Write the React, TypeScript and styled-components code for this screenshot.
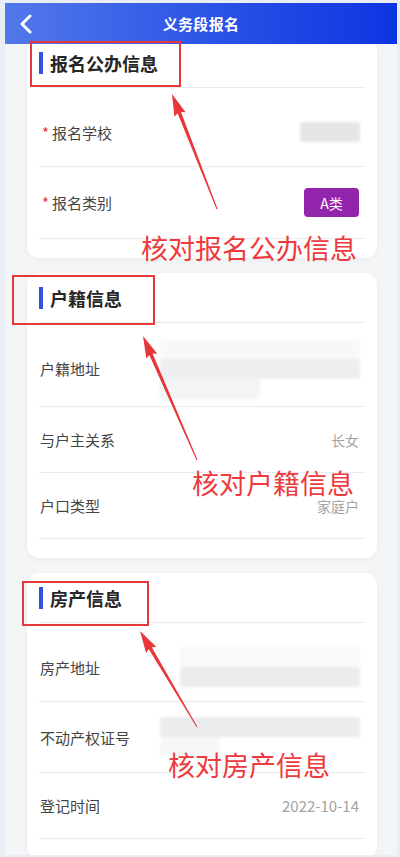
import React from "react";
import styled, { createGlobalStyle } from "styled-components";

const GlobalStyle = createGlobalStyle`
	html, body {
		margin: 0;
		padding: 0;
		background: #e9edf4;
		font-family: "Noto Sans CJK SC", "Noto Sans", sans-serif;
	}
	* {
		box-sizing: border-box;
	}
`;

const Root = styled.div`
	position: relative;
	width: 400px;
	height: 857px;
	padding: 3px 3px 2px 5px;
	overflow: hidden;
`;
const Frame = styled.div`
	height: 100%;
	background: #f4f5f7;
	overflow: hidden;
`;
const Header = styled.div`
	position: relative;
	z-index: 2;
	height: 41px;
	display: flex;
	align-items: center;
	background: linear-gradient(90deg, #5279ea 0%, #2d55e6 50%, #0c35e2 100%);
`;
const BackButton = styled.div`
	width: 40px;
	height: 41px;
	display: flex;
	align-items: center;
	padding-left: 14px;
`;
const HeaderTitle = styled.h1`
	flex: 1;
	margin: 0;
	text-align: center;
	color: #fff;
	font-size: 15px;
	font-weight: 700;
	letter-spacing: 0.3px;
`;
const HeaderSpacer = styled.div`
	width: 40px;
`;
const Content = styled.div`
	display: flex;
	flex-direction: column;
	gap: 15px;
	padding: 0 20px 0 22px;
`;
const Card = styled.section<{ $tucked?: boolean }>`
	background: #fff;
	border-radius: 12px;
	padding: 0 12px 19px;
	margin-top: ${(p) => (p.$tucked ? "-6px" : "0")};
	box-shadow: 0 2px 6px rgba(30, 40, 60, 0.04);
`;
const CardHead = styled.div`
	height: 50px;
	display: flex;
	align-items: center;
	border-bottom: 1px solid #ececee;
`;
const Bar = styled.span`
	width: 4px;
	height: 22px;
	background: #3552e4;
	margin-right: 7px;
`;
const CardTitle = styled.h2`
	margin: 0;
	font-size: 18px;
	font-weight: 700;
	color: #262626;
`;
const Row = styled.div<{ $h: number; $shift?: number }>`
	height: ${(p) => p.$h}px;
	padding-top: ${(p) => (p.$shift || 0) * 2}px;
	display: flex;
	align-items: center;
	justify-content: space-between;
	border-bottom: 1px solid #ececee;
`;
const Label = styled.span<{ $required?: boolean }>`
	padding-left: ${(p) => (p.$required ? "3px" : "1px")};
	font-size: 15px;
	color: #444;
`;
const Star = styled.span`
	color: #e53935;
	margin-right: 3px;
`;
const Value = styled.span<{ $wide?: boolean }>`
	padding-right: 6px;
	font-size: ${(p) => (p.$wide ? "15px" : "14px")};
	line-height: 16px;
	color: #a3a3a3;
`;
const Badge = styled.span`
	margin-right: 6px;
	width: 55px;
	height: 29px;
	border-radius: 4px;
	background: #9225ab;
	color: #fff;
	font-size: 14px;
	display: flex;
	align-items: center;
	justify-content: center;
`;
const Blurred = styled.div<{ $w: number }>`
	width: ${(p) => p.$w}px;
	margin-right: 5px;
	display: flex;
	flex-direction: column;
	align-items: flex-end;
	filter: blur(1.5px);
`;
const Smudge = styled.div<{ $w: number; $tone: string; $left?: boolean }>`
	width: ${(p) => p.$w}px;
	height: 20px;
	background: ${(p) => p.$tone};
	align-self: ${(p) => (p.$left ? "flex-start" : "flex-end")};
	border-radius: 2px;
`;

// annotation layer drawn on top of the screenshot
const Overlay = styled.div`
	position: absolute;
	inset: 0;
	pointer-events: none;
	z-index: 5;
`;
const MarkBox = styled.div<{ $x: number; $y: number; $w: number; $h: number }>`
	position: absolute;
	left: ${(p) => p.$x}px;
	top: ${(p) => p.$y}px;
	width: ${(p) => p.$w}px;
	height: ${(p) => p.$h}px;
	border: 2px solid #e5393b;
`;
const Note = styled.span<{ $x: number; $y: number }>`
	position: absolute;
	left: ${(p) => p.$x}px;
	top: ${(p) => p.$y}px;
	font-size: 27px;
	line-height: 27px;
	color: #ec3a3d;
	white-space: nowrap;
`;
const ArrowLayer = styled.svg`
	position: absolute;
	left: 0;
	top: 0;
`;

type Pt = [number, number];

function arrowPoints(tail: Pt, tip: Pt) {
	const dx = tip[0] - tail[0];
	const dy = tip[1] - tail[1];
	const len = Math.hypot(dx, dy);
	const ux = dx / len;
	const uy = dy / len;
	const nx = -uy;
	const ny = ux;
	const head = 20;
	const hw = 6;
	const sw = 1.8;
	const bx = tip[0] - ux * head;
	const by = tip[1] - uy * head;
	const pts: Pt[] = [
		[tail[0] + nx * 0.5, tail[1] + ny * 0.5],
		[bx + nx * sw, by + ny * sw],
		[bx + nx * hw - ux * 2, by + ny * hw - uy * 2],
		tip,
		[bx - nx * hw - ux * 2, by - ny * hw - uy * 2],
		[bx - nx * sw, by - ny * sw],
		[tail[0] - nx * 0.5, tail[1] - ny * 0.5],
	];
	return pts.map((p) => p.map((v) => v.toFixed(1)).join(",")).join(" ");
}

const arrows: { tail: Pt; tip: Pt }[] = [
	{ tail: [217, 209], tip: [172, 94] },
	{ tail: [197, 460], tip: [143, 336] },
	{ tail: [197, 727], tip: [140, 631] },
];

const notes = [
	{ text: "核对报名公办信息", x: 141, y: 234 },
	{ text: "核对户籍信息", x: 192, y: 469 },
	{ text: "核对房产信息", x: 168, y: 751 },
];

const boxes = [
	{ x: 30, y: 41, w: 151, h: 46 },
	{ x: 12, y: 275, w: 143, h: 50 },
	{ x: 22, y: 581, w: 127, h: 45 },
];

function App() {
	return (
		<>
			<GlobalStyle />
			<Root>
				<Frame>
					<Header>
						<BackButton>
							<svg width="14" height="20" viewBox="0 0 14 20">
								<polyline
									points="11,2 3,10 11,18"
									fill="none"
									stroke="#fff"
									strokeWidth="3"
									strokeLinecap="round"
									strokeLinejoin="round"
								/>
							</svg>
						</BackButton>
						<HeaderTitle>义务段报名</HeaderTitle>
						<HeaderSpacer />
					</Header>
					<Content>
						<Card $tucked>
							<CardHead>
								<Bar />
								<CardTitle>报名公办信息</CardTitle>
							</CardHead>
							<Row $h={79} $shift={5}>
								<Label $required>
									<Star>*</Star>报名学校
								</Label>
								<Blurred $w={60}>
									<Smudge $w={60} $tone="#e4e6e8" />
								</Blurred>
							</Row>
							<Row $h={72}>
								<Label $required>
									<Star>*</Star>报名类别
								</Label>
								<Badge>A类</Badge>
							</Row>
						</Card>
						<Card>
							<CardHead>
								<Bar />
								<CardTitle>户籍信息</CardTitle>
							</CardHead>
							<Row $h={84} $shift={4}>
								<Label>户籍地址</Label>
								<Blurred $w={200}>
									<Smudge $w={200} $tone="#f8f8f9" />
									<Smudge $w={200} $tone="#eceeef" />
									<Smudge $w={100} $tone="#f3f4f5" $left />
								</Blurred>
							</Row>
							<Row $h={66}>
								<Label>与户主关系</Label>
								<Value>长女</Value>
							</Row>
							<Row $h={66}>
								<Label>户口类型</Label>
								<Value>家庭户</Value>
							</Row>
						</Card>
						<Card>
							<CardHead>
								<Bar />
								<CardTitle>房产信息</CardTitle>
							</CardHead>
							<Row $h={79} $shift={5}>
								<Label>房产地址</Label>
								<Blurred $w={180}>
									<Smudge $w={180} $tone="#f9f9fa" />
									<Smudge $w={180} $tone="#eaeced" />
								</Blurred>
							</Row>
							<Row $h={71}>
								<Label>不动产权证号</Label>
								<Blurred $w={200}>
									<Smudge $w={200} $tone="#eaeced" />
									<Smudge $w={60} $tone="#f6f7f7" $left />
								</Blurred>
							</Row>
							<Row $h={66}>
								<Label>登记时间</Label>
								<Value $wide>2022-10-14</Value>
							</Row>
						</Card>
					</Content>
				</Frame>
				<Overlay>
					{boxes.map((b, i) => (
						<MarkBox key={i} $x={b.x} $y={b.y} $w={b.w} $h={b.h} />
					))}
					<ArrowLayer width="400" height="857" viewBox="0 0 400 857">
						{arrows.map((a, i) => (
							<polygon key={i} points={arrowPoints(a.tail, a.tip)} fill="#e8363a" />
						))}
					</ArrowLayer>
					{notes.map((n) => (
						<Note key={n.text} $x={n.x} $y={n.y}>
							{n.text}
						</Note>
					))}
				</Overlay>
			</Root>
		</>
	);
}

export default App;
